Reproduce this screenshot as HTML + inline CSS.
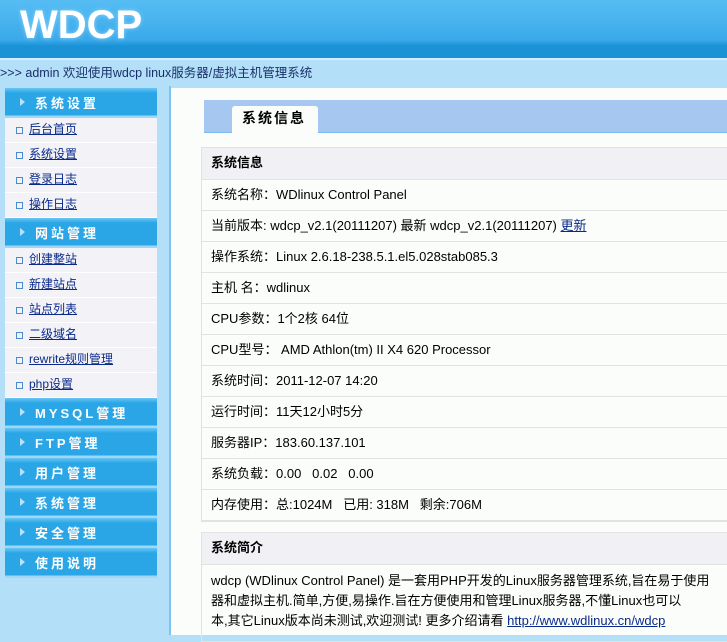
<!DOCTYPE html>
<html><head><meta charset="utf-8"><style>
*{margin:0;padding:0;box-sizing:border-box}
body{width:727px;height:635px;overflow:hidden;background:#b3dff8;font-family:"Liberation Sans","Noto Sans CJK SC",sans-serif;font-size:12px;line-height:16px;color:#000;position:relative}
.hd{position:absolute;left:0;top:0;width:727px;height:58px;background:linear-gradient(#56bdf3,#3aa9ea 40px,#1a92d6 46px,#1a92d6 57px)}
.logo{position:absolute;left:20px;top:2px;font:bold 40px/46px "Liberation Sans",sans-serif;color:#fff;letter-spacing:0px;text-shadow:0 0 4px #8fd2fa}
.bc{position:absolute;left:0;top:58px;width:727px;height:28px;background:#b3e0f8;border-top:2px solid #d2eefc;font-size:12.5px;color:#1a2f6a;padding:5px 0 0 0}
.side{position:absolute;left:5px;top:88px;width:152px}
.mh{height:30px;background:linear-gradient(#6ac6f3,#2aa6e6 5px,#2aa6e6 27px,#9fd8f5 28px);color:#fff;font-weight:bold;font-size:13px;letter-spacing:3px;padding:8px 0 0 30px;position:relative}
.mh:before{content:"";position:absolute;left:15px;top:10px;border-left:5px solid #b8e2fb;border-top:4px solid transparent;border-bottom:4px solid transparent}
.it{height:25px;background:#f3f2f7;border-bottom:1px solid #fff;padding:3px 0 0 24px;position:relative}
.it:before{content:"";position:absolute;left:11px;top:9px;width:5px;height:5px;border:1px solid #4a8ad0}
.it a{color:#0a2a8a;text-decoration:underline}
.vl{position:absolute;left:169px;top:86px;width:2px;height:549px;background:#7cc4f2}
.main{position:absolute;left:171px;top:88px;width:556px;height:547px;background:#fbfdfb}
.tabbar{position:absolute;left:204px;top:100px;width:523px;height:33px;background:#a6c8f0;border-bottom:1px solid #7ab8f0}
.tab{position:absolute;left:232px;top:106px;width:86px;height:27px;background:#fbfdfb;border-radius:3px 3px 0 0;font-weight:bold;font-size:14px;letter-spacing:2px;padding:4px 0 0 10px}
.tb{position:absolute;left:201px;width:526px;border:1px solid #e2e2e2;border-right:none}
.row{height:31px;border-bottom:1px solid #e2e2e2;padding:7px 0 0 9px;font-size:13px;white-space:nowrap}
.th{background:#f1f0f4;font-weight:bold;height:32px;padding-top:7px}
a{color:#0a2a8a}
.txt{padding:6px 0 0 9px;font-size:13px;line-height:20px;white-space:nowrap;overflow:hidden}
</style></head><body>
<div class="hd"><div class="logo">WDCP</div></div>
<div class="bc">&gt;&gt;&gt; admin 欢迎使用wdcp linux服务器/虚拟主机管理系统</div>
<div class="vl"></div>
<div class="side">
<div class="mh">系统设置</div>
<div class="it"><a>后台首页</a></div><div class="it"><a>系统设置</a></div><div class="it"><a>登录日志</a></div><div class="it"><a>操作日志</a></div>
<div class="mh">网站管理</div>
<div class="it"><a>创建整站</a></div><div class="it"><a>新建站点</a></div><div class="it"><a>站点列表</a></div><div class="it"><a>二级域名</a></div><div class="it"><a>rewrite规则管理</a></div><div class="it"><a>php设置</a></div>
<div class="mh">MYSQL管理</div><div class="mh">FTP管理</div><div class="mh">用户管理</div><div class="mh">系统管理</div><div class="mh">安全管理</div><div class="mh">使用说明</div>
</div>
<div class="main"></div>
<div class="tabbar"></div>
<div class="tab">系统信息</div>
<div class="tb" style="top:147px">
<div class="row th">系统信息</div>
<div class="row">系统名称：WDlinux Control Panel</div>
<div class="row">当前版本: wdcp_v2.1(20111207) 最新 wdcp_v2.1(20111207) <a style="text-decoration:underline">更新</a></div>
<div class="row">操作系统：Linux 2.6.18-238.5.1.el5.028stab085.3</div>
<div class="row">主机 名：wdlinux</div>
<div class="row">CPU参数：1个2核 64位</div>
<div class="row">CPU型号： AMD Athlon(tm) II X4 620 Processor</div>
<div class="row">系统时间：2011-12-07 14:20</div>
<div class="row">运行时间：11天12小时5分</div>
<div class="row">服务器IP：183.60.137.101</div>
<div class="row">系统负载：0.00 &nbsp; 0.02 &nbsp; 0.00</div>
<div class="row">内存使用：总:1024M &nbsp; 已用: 318M &nbsp; 剩余:706M</div>
</div>
<div class="tb" style="top:532px;height:110px">
<div class="row th">系统简介</div>
<div class="txt">wdcp (WDlinux Control Panel) 是一套用PHP开发的Linux服务器管理系统,旨在易于使用<br>器和虚拟主机.简单,方便,易操作.旨在方便使用和管理Linux服务器,不懂Linux也可以<br>本,其它Linux版本尚未测试,欢迎测试! 更多介绍请看 <a style="text-decoration:underline">http://www.wdlinux.cn/wdcp</a></div>
</div>
</body></html>
